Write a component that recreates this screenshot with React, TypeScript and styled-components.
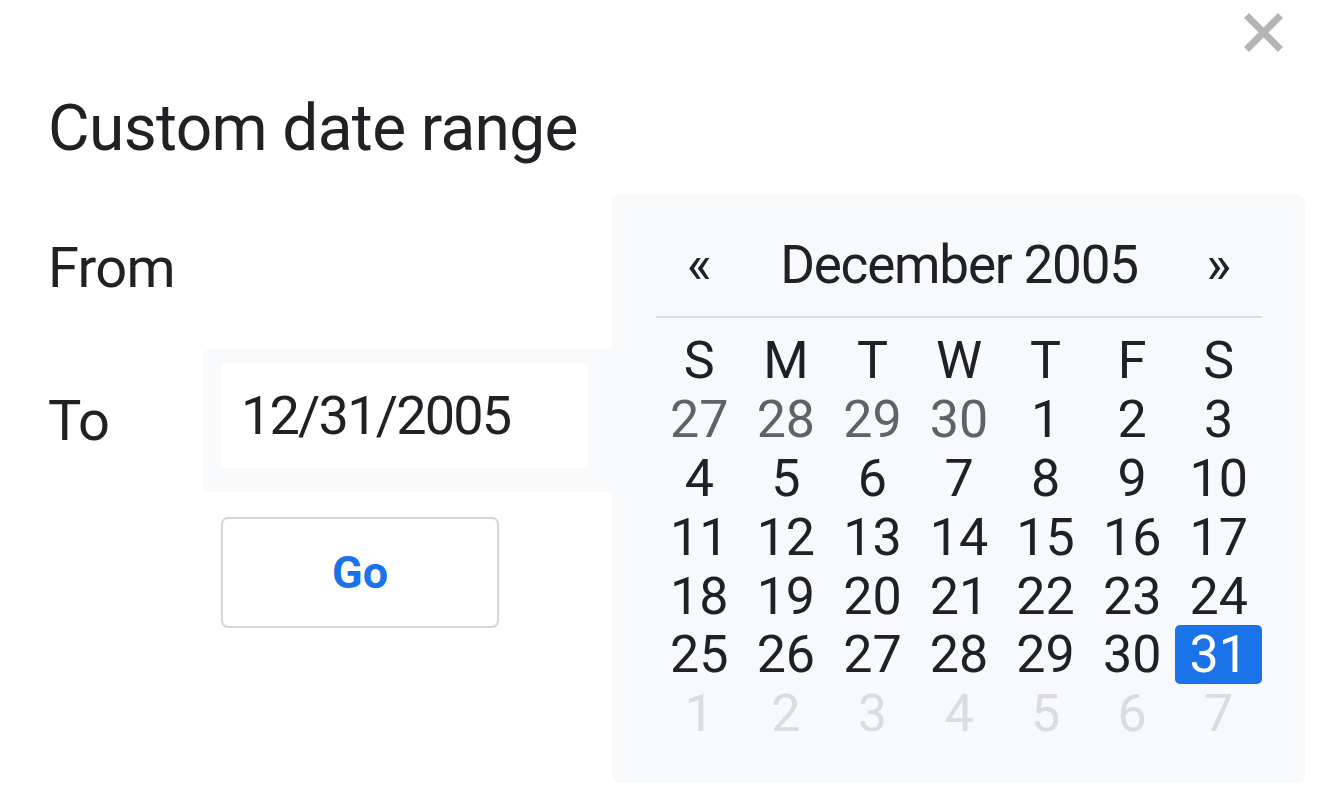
import styled, { createGlobalStyle } from "styled-components";

const GlobalStyle = createGlobalStyle`
  html, body {
    margin: 0;
    padding: 0;
    background: #ffffff;
  }
  body {
    font-family: Roboto, "Noto Sans", "Liberation Sans", sans-serif;
    color: #202124;
  }
`;

const Dialog = styled.div`
  position: relative;
  width: 1318px;
  height: 790px;
  box-sizing: border-box;
  padding-left: 48px;
  overflow: hidden;
  background: #fff;
`;

const TopBar = styled.div`
  display: flex;
  justify-content: flex-end;
  height: 52px;
  box-sizing: border-box;
  padding: 13px 35px 0 0;
`;

const CloseButton = styled.button`
  width: 39px;
  height: 39px;
  padding: 0;
  border: none;
  background: none;
  cursor: pointer;
  display: flex;
  align-items: center;
  justify-content: center;
`;

const Title = styled.h1`
  margin: 39px 0 0;
  font-size: 64px;
  line-height: 75px;
  font-weight: 400;
  letter-spacing: -0.65px;
  color: #202124;
`;

const FieldRow = styled.div<{ $gap: number }>`
  display: grid;
  grid-template-columns: 155px 1fr;
  align-items: center;
  margin-top: ${(p) => p.$gap}px;
`;

const Label = styled.div`
  font-size: 56px;
  line-height: 66px;
  letter-spacing: -0.7px;
  color: #202124;
`;

const InputShell = styled.div`
  width: 440px;
  box-sizing: border-box;
  padding: 14px 0 24px 18px;
  background: #f8f9fa;
  border-radius: 8px;
`;

const DateInput = styled.div`
  width: 367px;
  height: 105px;
  box-sizing: border-box;
  padding-left: 20px;
  display: flex;
  align-items: center;
  background: #ffffff;
  border-radius: 4px;
  font-size: 54px;
  letter-spacing: -1.8px;
  color: #202124;
`;

const GoButton = styled.button`
  margin: 25px 0 0 173px;
  width: 278px;
  height: 111px;
  box-sizing: border-box;
  border: 2px solid #d6d6d6;
  border-radius: 7px;
  background: #ffffff;
  font-family: Roboto, "Noto Sans", sans-serif;
  font-size: 45px;
  font-weight: 700;
  color: #1a73e8;
  cursor: pointer;
`;

const Calendar = styled.div`
  position: absolute;
  left: 612px;
  top: 195px;
  width: 693px;
  height: 588px;
  box-sizing: border-box;
  padding: 39px 43px 0 44px;
  background: #f8f9fa;
  border-radius: 8px;
`;

const MonthHeader = styled.div`
  display: grid;
  grid-template-columns: repeat(7, 1fr);
  align-items: center;
  height: 62px;
  padding-bottom: 20px;
  border-bottom: 2px solid #dadce0;
  margin-bottom: 13px;
`;

const NavArrow = styled.button`
  padding: 0;
  border: none;
  background: none;
  font-family: Roboto, "Noto Sans", sans-serif;
  font-size: 53px;
  line-height: 62px;
  color: #202124;
  text-align: center;
  cursor: pointer;
`;

const MonthLabel = styled.div`
  grid-column: 2 / span 5;
  text-align: center;
  font-size: 53px;
  line-height: 62px;
  letter-spacing: -1.2px;
  color: #202124;
`;

const DayGrid = styled.div`
  display: grid;
  grid-template-columns: repeat(7, 1fr);
  grid-auto-rows: 58.9px;
`;

const WeekdayCell = styled.div`
  display: flex;
  align-items: center;
  justify-content: center;
  font-size: 52px;
  color: #202124;
`;

type DayKind = "prev" | "current" | "next";

const dayColors: Record<DayKind, string> = {
  prev: "#5f6368",
  current: "#202124",
  next: "#dadce0",
};

const DayCell = styled.div<{ $kind: DayKind; $selected?: boolean }>`
  display: flex;
  align-items: center;
  justify-content: center;
  font-size: 52px;
  border-radius: 5px;
  color: ${(p) => (p.$selected ? "#ffffff" : dayColors[p.$kind])};
  background: ${(p) => (p.$selected ? "#1a73e8" : "transparent")};
  cursor: pointer;
`;

const weekdays = ["S", "M", "T", "W", "T", "F", "S"];

type Day = { n: number; kind: DayKind };

function buildDays(): Day[] {
  const days: Day[] = [];
  for (const n of [27, 28, 29, 30]) days.push({ n, kind: "prev" });
  for (let n = 1; n <= 31; n++) days.push({ n, kind: "current" });
  for (let n = 1; n <= 7; n++) days.push({ n, kind: "next" });
  return days;
}

function CloseIcon() {
  return (
    <svg width="39" height="39" viewBox="0 0 39 39">
      <path
        d="M5 5 L34 34 M34 5 L5 34"
        stroke="#b5b5b5"
        strokeWidth="7"
        strokeLinecap="square"
        fill="none"
      />
    </svg>
  );
}

export default function App() {
  const days = buildDays();
  return (
    <>
      <GlobalStyle />
      <Dialog>
        <TopBar>
          <CloseButton aria-label="Close">
            <CloseIcon />
          </CloseButton>
        </TopBar>
        <Title>Custom date range</Title>
        <FieldRow $gap={69}>
          <Label>From</Label>
        </FieldRow>
        <FieldRow $gap={48}>
          <Label>To</Label>
          <InputShell>
            <DateInput>12/31/2005</DateInput>
          </InputShell>
        </FieldRow>
        <GoButton>Go</GoButton>

        <Calendar>
          <MonthHeader>
            <NavArrow>«</NavArrow>
            <MonthLabel>December 2005</MonthLabel>
            <NavArrow>»</NavArrow>
          </MonthHeader>
          <DayGrid>
            {weekdays.map((w, i) => (
              <WeekdayCell key={`w-${i}`}>{w}</WeekdayCell>
            ))}
            {days.map((d, i) => (
              <DayCell
                key={`d-${i}`}
                $kind={d.kind}
                $selected={d.kind === "current" && d.n === 31}
              >
                {d.n}
              </DayCell>
            ))}
          </DayGrid>
        </Calendar>
      </Dialog>
    </>
  );
}
